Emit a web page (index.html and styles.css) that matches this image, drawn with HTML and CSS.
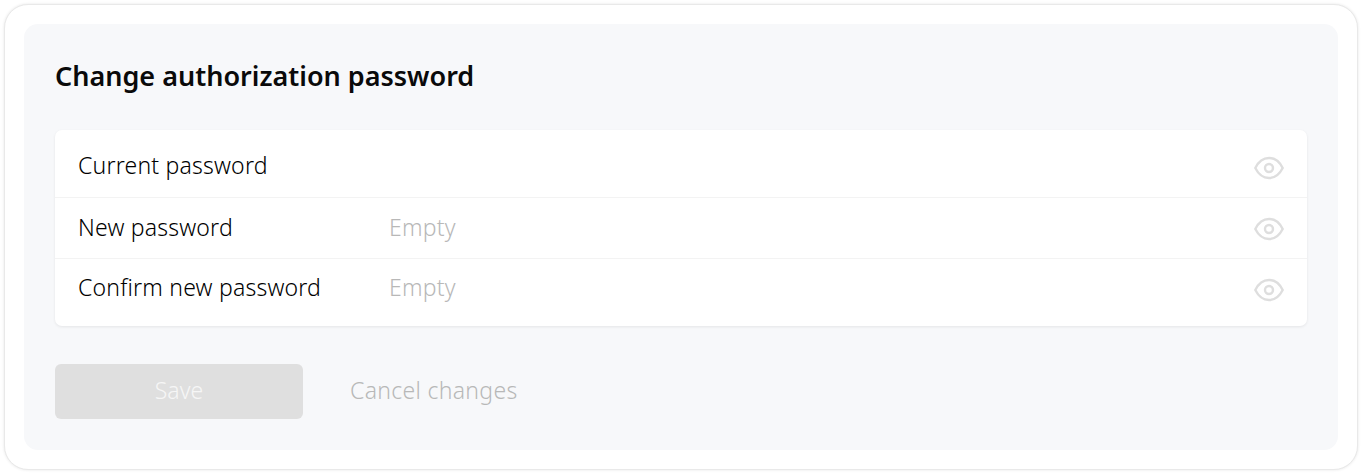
FILE: index.html
```html
<!DOCTYPE html>
<html>
	<head>
		<meta charset="UTF-8">
		<title>Change authorization password</title>
		<link rel="stylesheet" href="styles.css">
	</head>
	<body>
		<div class="outer">
			<div class="panel">
				<h2 class="title">Change authorization password</h2>
				<div class="fields">
					<div class="row row-first">
						<span class="label">Current password</span>
						<span class="value"></span>
						<svg class="eye" viewBox="0 0 30 24"><path d="M1.300 12C4.600 5.400 9.400 2 15 2s10.400 3.400 13.700 10C25.400 18.600 20.600 22 15 22S4.600 18.600 1.300 12z"/><circle cx="15" cy="12" r="4"/></svg>
					</div>
					<div class="row">
						<span class="label">New password</span>
						<span class="value">Empty</span>
						<svg class="eye" viewBox="0 0 30 24"><path d="M1.300 12C4.600 5.400 9.400 2 15 2s10.400 3.400 13.700 10C25.400 18.600 20.600 22 15 22S4.600 18.600 1.300 12z"/><circle cx="15" cy="12" r="4"/></svg>
					</div>
					<div class="row row-last">
						<span class="label">Confirm new password</span>
						<span class="value">Empty</span>
						<svg class="eye" viewBox="0 0 30 24"><path d="M1.300 12C4.600 5.400 9.400 2 15 2s10.400 3.400 13.700 10C25.400 18.600 20.600 22 15 22S4.600 18.600 1.300 12z"/><circle cx="15" cy="12" r="4"/></svg>
					</div>
				</div>
				<div class="actions">
					<div class="save">Save</div>
					<span class="cancel">Cancel changes</span>
				</div>
			</div>
		</div>
	</body>
</html>
```

FILE: styles.css
```css
*{
	margin: 0;
	padding: 0;
	box-sizing: border-box;
}
body{
	height: 474px;
	padding: 4px;
	background: #fff;
	font-family: "Noto Sans", "Lato", sans-serif;
	overflow: hidden;
}
.outer{
	height: 466px;
	padding: 19px;
	background: #fff;
	border: 1px solid #e9e9e9;
	border-radius: 24px;
	box-shadow: 0 0 3px rgba(0,0,0,0.1);
}
.panel{
	height: 426px;
	padding: 34px 31px 31px;
	background: #f7f8fa;
	border-radius: 14px;
}
.title{
	font-size: 27px;
	line-height: 35px;
	font-weight: 600;
	color: #0a0a0a;
}
.fields{
	margin-top: 37px;
	background: #fff;
	border-radius: 7px;
	box-shadow: 0 1px 3px rgba(0,0,0,0.08);
}
.row{
	height: 61px;
	display: flex;
	align-items: center;
	padding: 0 23px 3px 23px;
	border-bottom: 1px solid #f3f3f3;
	font-size: 23px;
	font-weight: 300;
	letter-spacing: 0.2px;
}
.row-first{
	height: 68px;
	padding-top: 3px;
	padding-bottom: 0;
}
.row-last{
	height: 67px;
	padding-bottom: 11px;
	border-bottom: none;
}
.label{
	width: 311px;
	color: #000;
}
.value{
	flex: 1;
	color: #b8b8b8;
}
.eye{
	width: 30px;
	height: 24px;
	margin-top: 5px;
	fill: none;
	stroke: #dedede;
	stroke-width: 2.4;
}
.actions{
	margin-top: 38px;
	display: flex;
	align-items: center;
	gap: 47px;
}
.save{
	width: 248px;
	height: 55px;
	display: flex;
	align-items: center;
	justify-content: center;
	padding-bottom: 4px;
	background: #dfdfdf;
	border-radius: 6px;
	color: #f6f6f6;
	font-size: 23px;
	font-weight: 300;
}
.cancel{
	padding-bottom: 3px;
	color: #b8b8b8;
	font-size: 23px;
	font-weight: 300;
	letter-spacing: 0.3px;
}
```
